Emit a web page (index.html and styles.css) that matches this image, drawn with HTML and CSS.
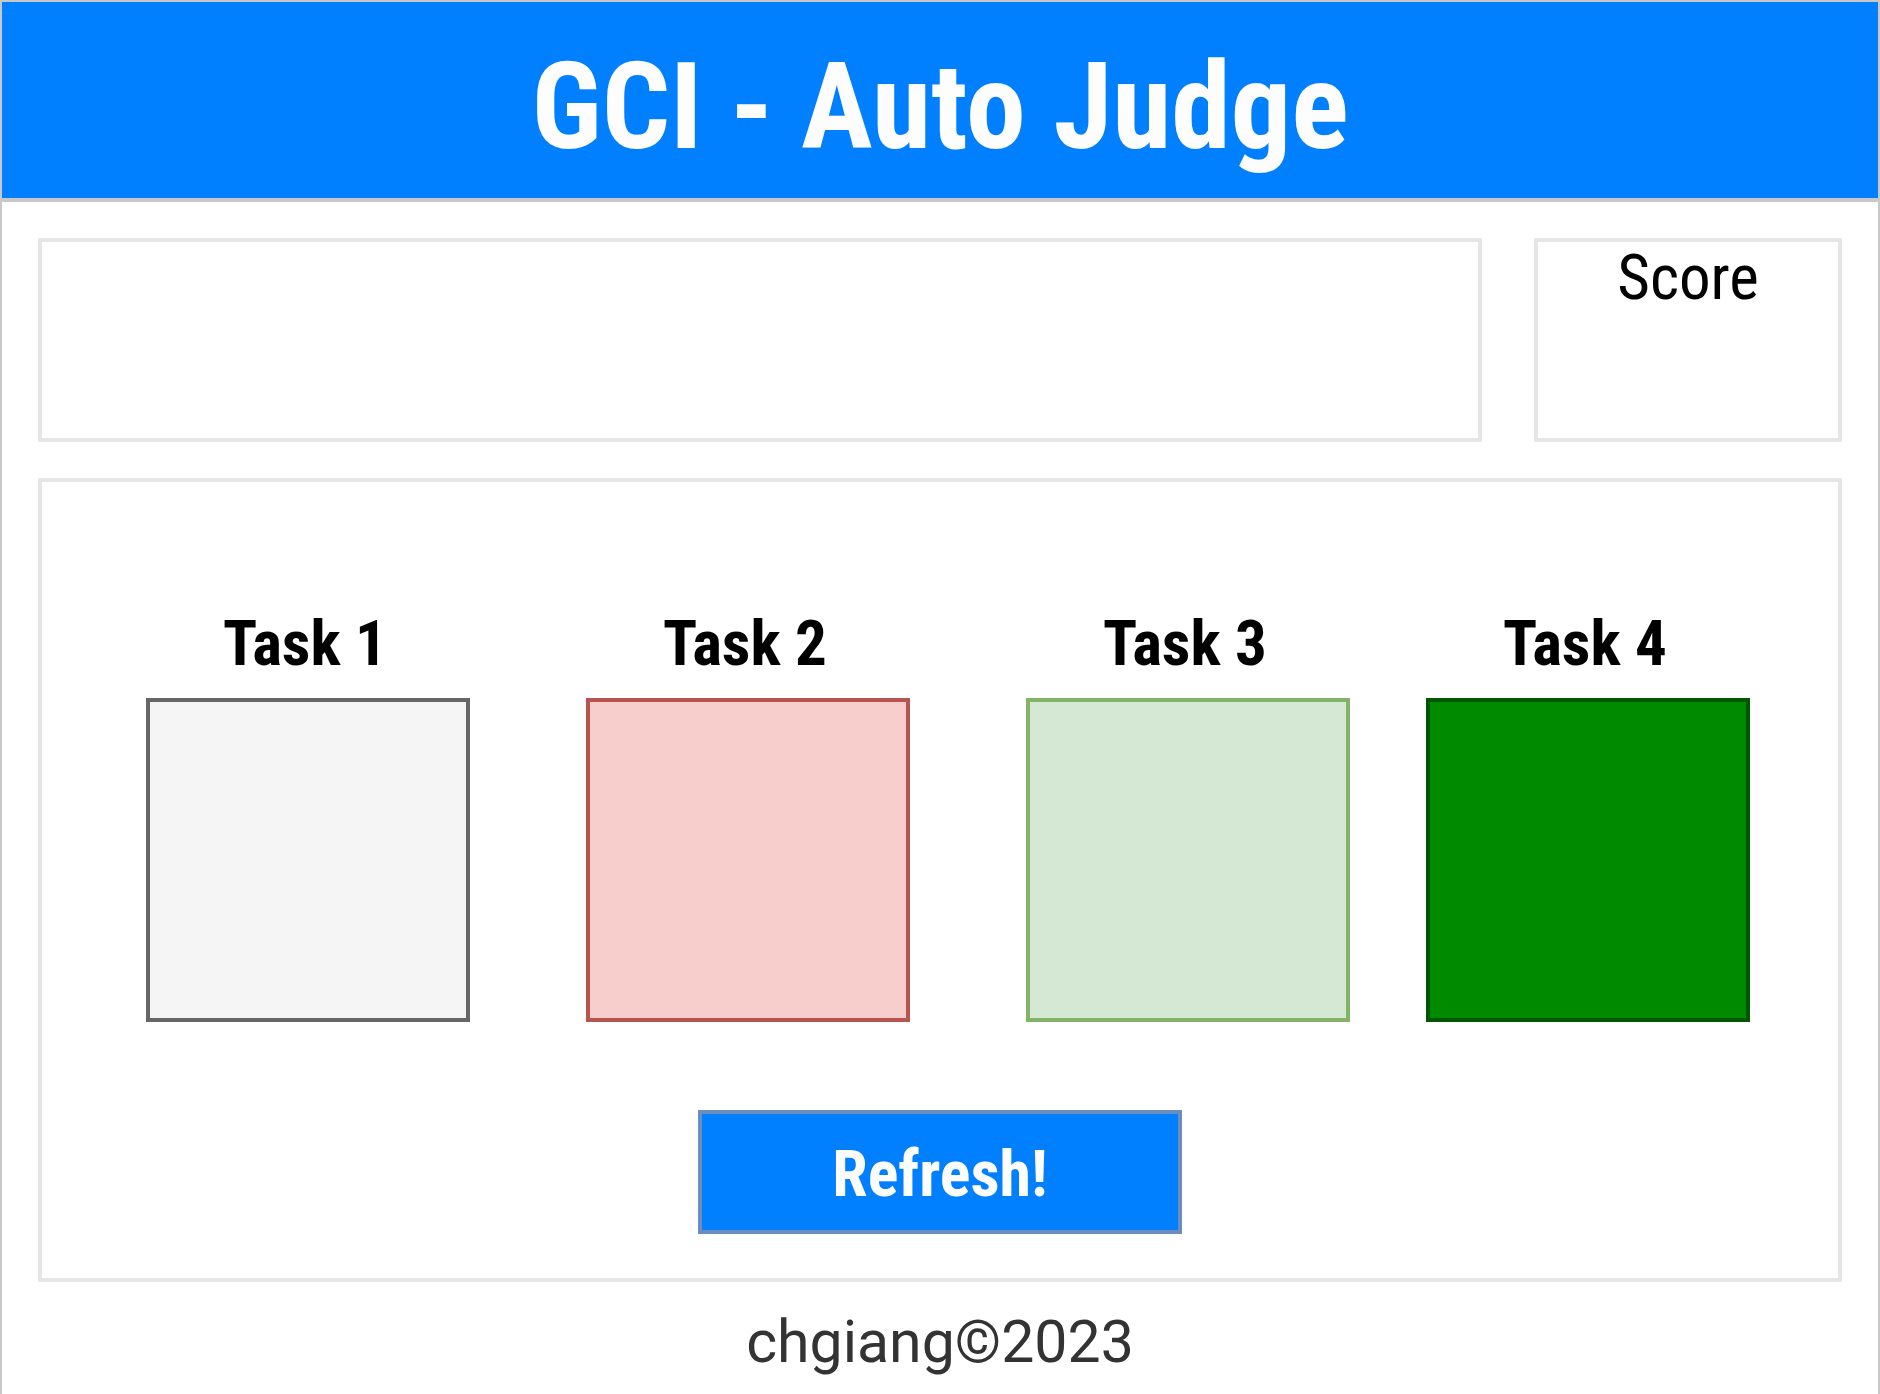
FILE: index.html
```html
<!DOCTYPE html>
<html lang="en">
<head>
<meta charset="utf-8">
<title>GCI - Auto Judge</title>
<link rel="stylesheet" href="styles.css">
</head>
<body>
<div class="page">
  <header class="header">
    <h1 class="title">GCI - Auto Judge</h1>
  </header>
  <main class="content">
    <section class="top-row">
      <div class="panel info"></div>
      <div class="panel score">
        <div class="score-label">Score</div>
      </div>
    </section>
    <section class="panel board">
      <div class="tasks">
        <div class="task">
          <div class="task-label">Task 1</div>
          <div class="task-box state-none"></div>
        </div>
        <div class="task">
          <div class="task-label">Task 2</div>
          <div class="task-box state-fail"></div>
        </div>
        <div class="task">
          <div class="task-label">Task 3</div>
          <div class="task-box state-partial"></div>
        </div>
        <div class="task task-last">
          <div class="task-label">Task 4</div>
          <div class="task-box state-pass"></div>
        </div>
      </div>
      <div class="actions">
        <button class="refresh" type="button">Refresh!</button>
      </div>
    </section>
    <footer class="footer">chgiang©2023</footer>
  </main>
</div>
</body>
</html>
```
FILE: styles.css
```css
* {
  box-sizing: border-box;
}

html, body {
  margin: 0;
  padding: 0;
  background: #ffffff;
}

body {
  font-family: "Liberation Sans Narrow", "Arial Narrow", "Roboto Condensed", "DejaVu Sans Condensed", "Liberation Sans", sans-serif;
  font-stretch: condensed;
}

.page {
  width: 1880px;
  height: 1394px;
  border-top: 2px solid #c8c8c8;
  border-left: 2px solid #c8c8c8;
  border-right: 2px solid #c8c8c8;
  overflow: hidden;
}

.header {
  height: 200px;
  background: #007fff;
  border-bottom: 4px solid #c8c8c8;
  padding-top: 12px;
}

.title {
  margin: 0;
  text-align: center;
  color: #fdfdfd;
  font-size: 120px;
  font-weight: 700;
  line-height: 186px;
}

.content {
  padding: 36px 36px 0 36px;
}

.top-row {
  display: flex;
  gap: 52px;
}

.panel {
  border: 4px solid #e6e6e6;
  background: #ffffff;
}

.info {
  width: 1444px;
  height: 204px;
}

.score {
  width: 308px;
  height: 204px;
  padding-top: 1px;
}

.score-label {
  text-align: center;
  font-size: 63px;
  line-height: 70px;
  color: #000000;
}

.board {
  margin-top: 36px;
  width: 1804px;
  height: 804px;
  padding: 122px 0 44px 0;
}

.tasks {
  display: flex;
  padding-left: 104px;
}

.task {
  width: 324px;
  display: flex;
  flex-direction: column;
  align-items: center;
}

.task + .task {
  margin-left: 116px;
}

.task.task-last {
  margin-left: 76px;
}

.task-label {
  font-size: 63px;
  font-weight: 700;
  line-height: 80px;
  height: 80px;
  margin-bottom: 14px;
  margin-right: 6px;
  color: #000000;
}

.task-box {
  width: 324px;
  height: 324px;
  border: 4px solid;
}

.state-none {
  background: #f5f5f5;
  border-color: #666666;
}

.state-fail {
  background: #f8cecc;
  border-color: #b85450;
}

.state-partial {
  background: #d5e8d4;
  border-color: #82b366;
}

.state-pass {
  background: #008a00;
  border-color: #005700;
}

.actions {
  display: flex;
  justify-content: center;
  margin-top: 88px;
}

.refresh {
  width: 484px;
  height: 124px;
  background: #007fff;
  border: 4px solid #6c8ebf;
  color: #fdfdfd;
  font-family: inherit;
  font-size: 64px;
  font-weight: 700;
  line-height: 110px;
  padding: 6px 0 0 0;
  margin: 0;
  cursor: pointer;
}

.footer {
  text-align: center;
  color: #333333;
  font-family: Roboto, "Liberation Sans", sans-serif;
  font-stretch: normal;
  font-size: 59px;
  line-height: 80px;
  margin-top: 20px;
}
```
